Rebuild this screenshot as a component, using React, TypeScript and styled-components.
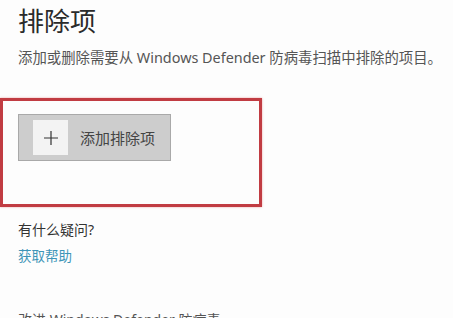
import React from 'react'
import styled, { createGlobalStyle } from 'styled-components'

const GlobalStyle = createGlobalStyle`
    html, body {
        margin: 0;
        padding: 0;
        background: #fdfdfd;
        overflow: hidden;
    }
    body {
        font-family: "Noto Sans", "Noto Sans CJK SC", sans-serif;
        color: #333;
    }
`

const Page = styled.div`
    display: flex;
    flex-direction: column;
    width: 453px;
`
const Section = styled.div`
    display: flex;
    flex-direction: column;
    flex-shrink: 0;
    padding-left: 18px;
`
const Title = styled.h1`
    margin: 4px 0 0 0;
    font-size: 26px;
    line-height: 34px;
    font-weight: 400;
    color: #2b2b2b;
`
const Description = styled.p`
    margin: 11px 0 0 0;
    font-size: 14.4px;
    line-height: 18px;
    color: #555;
    white-space: nowrap;
`
const Highlight = styled.div`
    display: flex;
    flex-shrink: 0;
    align-items: flex-start;
    box-sizing: border-box;
    width: 262px;
    height: 109px;
    margin-top: 31px;
    padding: 13px 0 0 15px;
    border: 3px solid #c13c42;
    box-shadow: 0 0 2px rgba(220, 80, 80, 0.5);
`
const AddButton = styled.button`
    display: flex;
    align-items: center;
    box-sizing: border-box;
    width: 153px;
    height: 47px;
    padding: 0 0 0 14px;
    background: #cdcdcd;
    border: 1px solid #a9a9a9;
    font-family: inherit;
    cursor: pointer;
`
const IconTile = styled.span`
    display: flex;
    align-items: center;
    justify-content: center;
    width: 35px;
    height: 35px;
    background: #f3f3f3;
`
const ButtonLabel = styled.span`
    margin-left: 12px;
    font-size: 15px;
    color: #444;
`
const Question = styled.div`
    margin-top: 13px;
    font-size: 14px;
    line-height: 20px;
    color: #333;
`
const HelpLink = styled.a`
    margin-top: 6px;
    font-size: 13.5px;
    line-height: 20px;
    color: #3d95b8;
    text-decoration: none;
    width: fit-content;
`
const FooterText = styled.div`
    margin-top: 44px;
    font-size: 14px;
    line-height: 20px;
    color: #555;
    white-space: nowrap;
`

const PlusIcon = () => (
    <svg width="16" height="16" viewBox="0 0 16 16">
        <path d="M8 1v14M1 8h14" stroke="#333" strokeWidth="1.2" fill="none" />
    </svg>
)

const App = () => {
    return (
        <Page>
            <GlobalStyle />
            <Section>
                <Title>排除项</Title>
                <Description>添加或删除需要从 Windows Defender 防病毒扫描中排除的项目。</Description>
            </Section>
            <Highlight>
                <AddButton>
                    <IconTile><PlusIcon /></IconTile>
                    <ButtonLabel>添加排除项</ButtonLabel>
                </AddButton>
            </Highlight>
            <Section>
                <Question>有什么疑问?</Question>
                <HelpLink href="#">获取帮助</HelpLink>
                <FooterText>改进 Windows Defender 防病毒</FooterText>
            </Section>
        </Page>
    )
}

export default App
